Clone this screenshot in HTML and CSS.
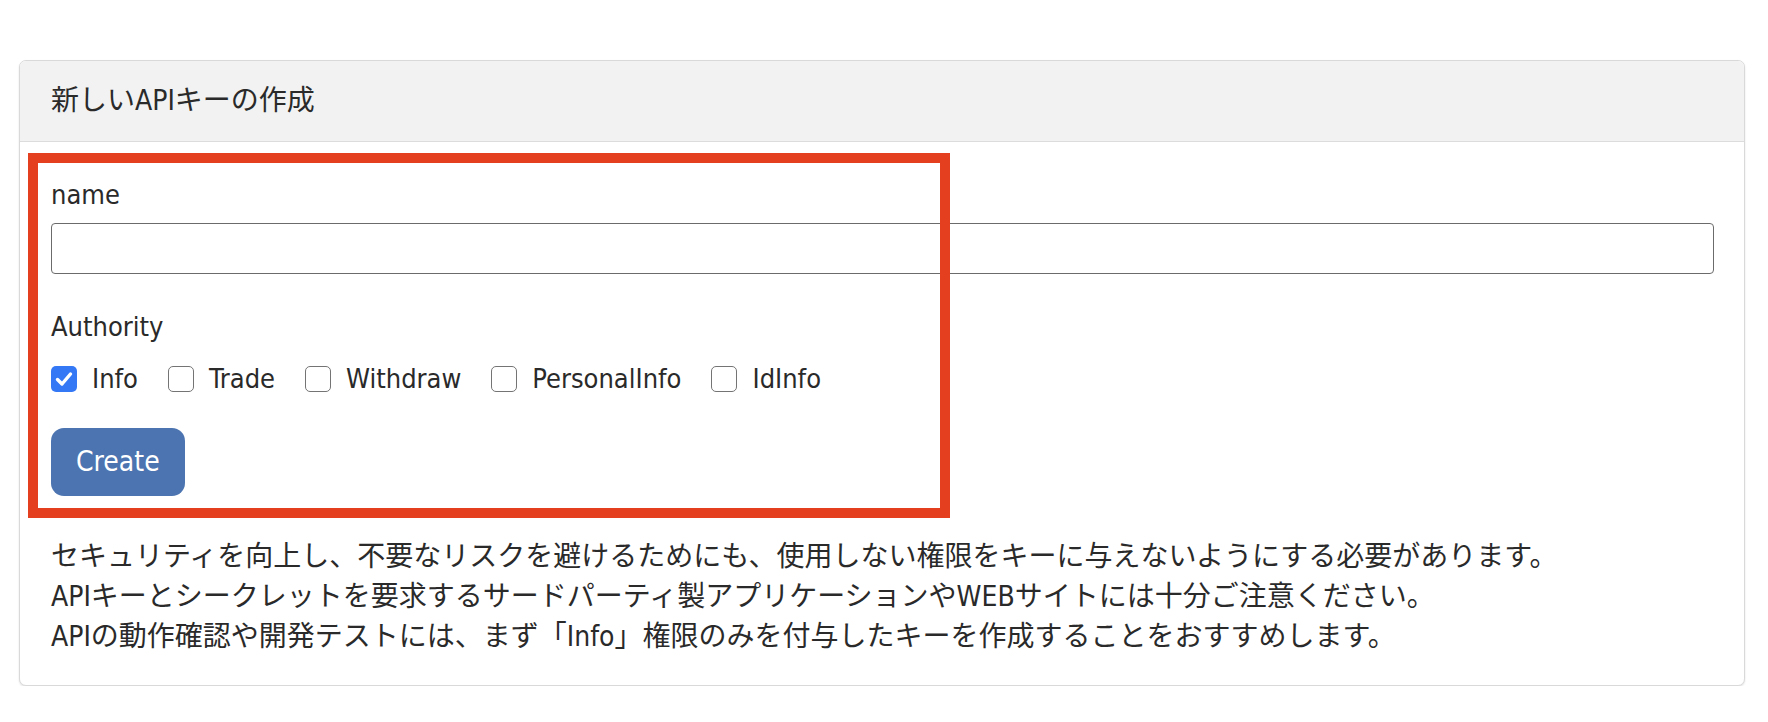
FILE: index.html
```html
<!DOCTYPE html>
<html lang="ja">
<head>
<meta charset="utf-8">
<title>新しいAPIキーの作成</title>
<link rel="stylesheet" href="styles.css">
</head>
<body>
<div class="card">
  <div class="card-header">新しいAPIキーの作成</div>
  <div class="card-body">
    <form class="key-form">
      <label class="field-label" for="name">name</label>
      <input class="text-input" id="name" type="text">
      <div class="field-label authority">Authority</div>
      <div class="options">
        <label class="opt"><span class="box checked"><svg viewBox="0 0 26 26" width="26" height="26"><path d="M6.5 13.5 L11 18 L19.5 8" fill="none" stroke="#fff" stroke-width="3.4" stroke-linecap="round" stroke-linejoin="round"/></svg></span>Info</label>
        <label class="opt"><span class="box"></span>Trade</label>
        <label class="opt"><span class="box"></span>Withdraw</label>
        <label class="opt"><span class="box"></span>PersonalInfo</label>
        <label class="opt"><span class="box"></span>IdInfo</label>
      </div>
      <button class="btn-create" type="button">Create</button>
    </form>
    <p class="note">セキュリティを向上し、不要なリスクを避けるためにも、使用しない権限をキーに与えないようにする必要があります。<br>APIキーとシークレットを要求するサードパーティ製アプリケーションやWEBサイトには十分ご注意ください。<br>APIの動作確認や開発テストには、まず「Info」権限のみを付与したキーを作成することをおすすめします。</p>
  </div>
  <div class="highlight"></div>
</div>
</body>
</html>
```

FILE: styles.css
```css
html, body {
  margin: 0;
  padding: 0;
  background: #ffffff;
}

body {
  font-family: "DejaVu Sans Condensed", "DejaVu Sans", "Noto Sans CJK JP", sans-serif;
  font-stretch: condensed;
  font-size: 27px;
  line-height: 40px;
  color: #2a2a2a;
}

.card {
  position: relative;
  box-sizing: border-box;
  width: 1726px;
  margin: 60px 0 0 19px;
  border: 1px solid #d9d9d9;
  border-radius: 7px;
  box-shadow: 0 1px 2px rgba(0, 0, 0, 0.12);
  background: #ffffff;
}

.card-header {
  display: flex;
  align-items: center;
  height: 80px;
  padding: 0 31px;
  background: #f2f2f2;
  border-bottom: 1px solid #dcdcdc;
  border-radius: 6px 6px 0 0;
  font-size: 28px;
}

.card-body {
  padding: 33px 30px 28px 31px;
}

.key-form {
  display: flex;
  flex-direction: column;
  align-items: flex-start;
}

.field-label {
  display: block;
  height: 40px;
}

.text-input {
  box-sizing: border-box;
  width: 100%;
  height: 51px;
  margin: 8px 0 0;
  border: 1px solid #6b6b6b;
  border-radius: 4px;
  background: #ffffff;
  font: inherit;
  padding: 0 10px;
}

.authority {
  margin-top: 33px;
}

.options {
  display: flex;
  align-items: center;
  gap: 30px;
  height: 40px;
  margin-top: 12px;
}

.opt {
  display: flex;
  align-items: center;
  gap: 15px;
}

.box {
  box-sizing: border-box;
  display: block;
  width: 26px;
  height: 26px;
  border: 1.5px solid #747474;
  border-radius: 5px;
  background: #ffffff;
}

.box svg {
  display: block;
}

.box.checked {
  border: none;
  background: #3478f6;
}

.btn-create {
  box-sizing: border-box;
  height: 68px;
  margin-top: 29px;
  padding: 0 25px;
  border: none;
  border-radius: 13px;
  background: #4b74b0;
  color: #ffffff;
  font: inherit;
  font-size: 28px;
  line-height: 40px;
}

.note {
  margin: 41px 0 0;
  font-size: 28px;
  line-height: 40px;
  white-space: nowrap;
}

.highlight {
  position: absolute;
  box-sizing: border-box;
  left: 8px;
  top: 92px;
  width: 922px;
  height: 365px;
  border: 10px solid #e43f1f;
  pointer-events: none;
}
```
